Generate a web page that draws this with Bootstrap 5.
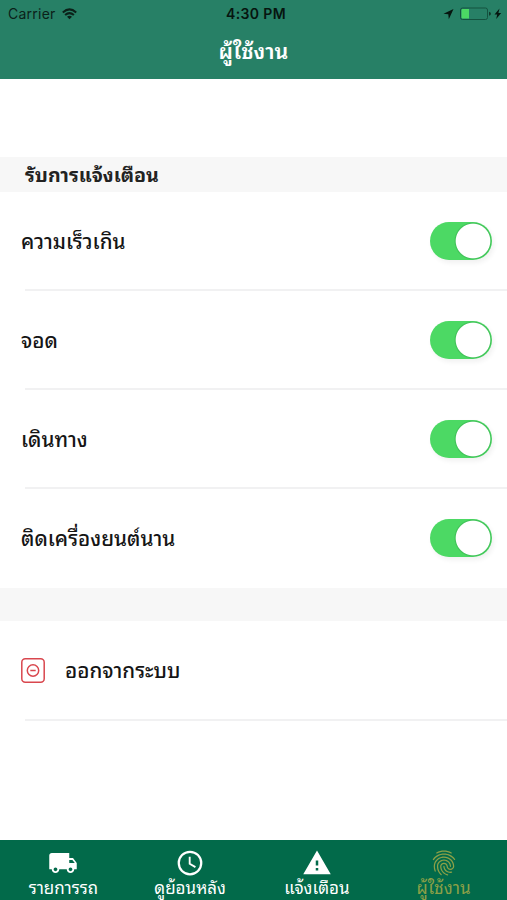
<!DOCTYPE html>
<html lang="th">
<head>
<meta charset="utf-8">
<meta name="viewport" content="width=device-width, initial-scale=1">
<title>ผู้ใช้งาน</title>
<link rel="stylesheet" href="https://cdn.jsdelivr.net/npm/bootstrap@5.3.0/dist/css/bootstrap.min.css">
<style>
body{font-family:Thonburi,"Noto Sans Thai Looped",Loma,Garuda,Waree,Sarabun,"Noto Sans Thai","Noto Sans","Liberation Sans",sans-serif;color:#151515;background:#fff}
svg{display:block;flex:none}
.screen{height:900px;overflow:hidden}
.app-head{height:79px;background:#278066;flex:none}
.status{height:27px;display:grid;grid-template-columns:1fr auto 1fr;font-family:Inter,"Liberation Sans",sans-serif;font-size:14px;color:#0b2119;padding:0 5px 0 8px}
.status .clock{font-weight:600;color:#06150f;letter-spacing:.35px;padding-left:2px}
.carrier{letter-spacing:.25px}
.wifi{margin-left:6px}
.title{height:52px;color:#fff;font-size:21.5px;font-weight:600;line-height:46px}
.spacer{height:78px}
.section-head{height:35px;line-height:33px;background:#f7f7f7;padding-left:25px;font-size:19.6px;font-weight:700;color:#222}
.setting{height:99px;padding:0 15px 0 21px;position:relative;font-size:20.6px;font-weight:500}
.setting span{padding-bottom:3px}
.ruled::after{content:"";position:absolute;left:25px;right:0;bottom:0;height:2px;background:#f1f1f2}
.logout{height:100px}
.logout svg{margin-bottom:1px}
.form-switch .toggle{width:62px;height:38px;margin:0 0 2px;border:0;background-color:#4cd964!important;background-image:radial-gradient(circle,#fff 0 16.8px,#2e9f4666 17.8px,transparent 19px)!important;background-size:38px 38px;background-position:right 0 center!important;box-shadow:2px 3px 5px #0000000f}
.band{height:33px;background:#f7f7f7}
.tabs{height:60px;background:#026a4a;flex:none}
.tab-link{color:#fff;font-size:17px;text-decoration:none;padding-top:8px}
.tab-link span{line-height:18px}
.tab-link.current{color:#8ca047;font-size:17.3px}
.tab-link.current span{line-height:17px}
</style>
<script src="https://cdn.jsdelivr.net/npm/bootstrap@5.3.0/dist/js/bootstrap.bundle.min.js"></script>
</head>
<body>
<div class="screen d-flex flex-column">
<header class="app-head">
  <div class="status align-items-center">
    <div class="d-flex align-items-center"><span class="carrier">Carrier</span>
      <svg class="wifi" width="15" height="12" viewBox="0 0 15 12" fill="none" stroke="#0b2119" stroke-width="2"><path d="M.8 4.400Q7.500-1.600 14.200 4.400M3.100 7Q7.500 3.200 11.900 7"/><path d="M7.500 11.300 5 8.800Q7.500 6.800 10 8.800Z" fill="#0b2119" stroke="none"/></svg>
    </div>
    <span class="clock">4:30 PM</span>
    <div class="d-flex align-items-center justify-content-end">
      <svg width="59" height="14" viewBox="0 0 59 14"><path d="M10.500 2 .5 6.700l4.800.6.5 4.900Z" fill="#06150f"/><rect x="17.500" y="1" width="27" height="11.500" rx="2" fill="none" stroke="#14523f"/><path d="M18.500 3q0-1 1-1h6.500v9.500h-6.500q-1 0-1-1Z" fill="#4cd964"/><path d="M46 4.700q2 .4 2 2t-2 2Z" fill="#123a2d"/><path d="m56.500 1.500-5 6h2.700l-1 4.500 5-6h-2.800Z" fill="#06150f"/></svg>
    </div>
  </div>
  <h1 class="title text-center m-0">ผู้ใช้งาน</h1>
</header>
<main class="flex-grow-1">
  <div class="spacer"></div>
  <h2 class="section-head m-0">รับการแจ้งเตือน</h2>
  <label class="setting ruled form-switch d-flex align-items-center justify-content-between"><span>ความเร็วเกิน</span><input class="form-check-input toggle" type="checkbox" role="switch" checked></label>
  <label class="setting ruled form-switch d-flex align-items-center justify-content-between"><span>จอด</span><input class="form-check-input toggle" type="checkbox" role="switch" checked></label>
  <label class="setting ruled form-switch d-flex align-items-center justify-content-between"><span>เดินทาง</span><input class="form-check-input toggle" type="checkbox" role="switch" checked></label>
  <label class="setting form-switch d-flex align-items-center justify-content-between"><span>ติดเครื่องยนต์นาน</span><input class="form-check-input toggle" type="checkbox" role="switch" checked></label>
  <div class="band"></div>
  <div class="setting logout ruled d-flex align-items-center">
    <svg width="24" height="25" viewBox="0 0 24 25" fill="none" stroke="#d9474e" stroke-width="1.500"><rect x=".8" y=".8" width="22.400" height="23.400" rx="3.500"/><circle cx="12" cy="12.500" r="5.700"/><path d="M9.300 12.500h5.400"/></svg>
    <span class="ms-3 ps-1">ออกจากระบบ</span>
  </div>
</main>
<nav class="tabs d-flex">
  <a href="#" class="tab-link col-3 d-flex flex-column align-items-center"><svg width="30" height="30" viewBox="0 0 24 24" fill="#fff"><path d="M20 8h-3V4H3c-1.100 0-2 .9-2 2v11h2c0 1.660 1.340 3 3 3s3-1.340 3-3h6c0 1.660 1.340 3 3 3s3-1.340 3-3h2v-5l-3-4zM6 18.500c-.83 0-1.500-.67-1.500-1.500s.67-1.500 1.500-1.500 1.500.67 1.500 1.500-.67 1.500-1.500 1.500zm13.500-9 1.960 2.500H17V9.500h2.500zm-1.500 9c-.83 0-1.500-.67-1.500-1.500s.67-1.500 1.500-1.500 1.500.67 1.500 1.500-.67 1.500-1.500 1.500z"/></svg><span>รายการรถ</span></a>
  <a href="#" class="tab-link col-3 d-flex flex-column align-items-center"><svg width="30" height="30" viewBox="0 0 24 24" fill="none" stroke="#fff"><circle cx="12" cy="12" r="9" stroke-width="1.800"/><path d="M11.750 7v5.600l4.600 2.700" stroke-width="1.500"/></svg><span>ดูย้อนหลัง</span></a>
  <a href="#" class="tab-link col-3 d-flex flex-column align-items-center"><svg width="30" height="30" viewBox="0 0 24 24" fill="#fff"><path d="M1 21h22L12 2 1 21zm12-3h-2v-2h2v2zm0-4h-2v-4h2v4z"/></svg><span>แจ้งเตือน</span></a>
  <a href="#" class="tab-link current col-3 d-flex flex-column align-items-center"><svg width="30" height="30" viewBox="0 0 24 24" fill="#8ca047"><path d="M17.810 4.470c-.08 0-.16-.02-.23-.06C15.660 3.420 14 3 12.010 3c-1.980 0-3.860.47-5.570 1.410-.24.13-.54.04-.68-.2-.13-.24-.04-.55.2-.68C7.820 2.520 9.860 2 12.010 2c2.130 0 3.990.47 6.030 1.520.25.13.34.43.21.67-.09.18-.26.28-.44.28zM3.500 9.720c-.1 0-.2-.03-.29-.09-.23-.16-.28-.47-.12-.7.99-1.400 2.250-2.500 3.750-3.270C9.980 4.040 14 4.030 17.150 5.650c1.500.77 2.760 1.860 3.750 3.250.16.22.11.54-.12.7-.23.16-.54.11-.7-.12-.9-1.260-2.040-2.250-3.390-2.940-2.870-1.470-6.540-1.470-9.400.01-1.360.7-2.500 1.700-3.400 2.960-.08.14-.23.21-.39.21zm6.250 12.070c-.13 0-.26-.05-.35-.15-.87-.87-1.340-1.430-2.010-2.640-.69-1.230-1.050-2.730-1.050-4.340 0-2.970 2.540-5.390 5.660-5.390s5.660 2.420 5.660 5.390c0 .28-.22.5-.5.5s-.5-.22-.5-.5c0-2.420-2.090-4.390-4.660-4.390-2.570 0-4.660 1.970-4.660 4.390 0 1.440.32 2.770.93 3.850.64 1.150 1.080 1.640 1.850 2.420.19.2.19.51 0 .71-.11.1-.24.15-.37.15zm7.170-1.850c-1.190 0-2.240-.3-3.100-.89-1.490-1.010-2.380-2.650-2.380-4.390 0-.28.22-.5.5-.5s.5.22.5.5c0 1.410.72 2.740 1.940 3.560.71.48 1.540.71 2.540.71.24 0 .64-.03 1.040-.1.27-.05.53.13.58.41.05.27-.13.53-.41.58-.57.11-1.070.12-1.210.12zM14.910 22c-.04 0-.09-.01-.13-.02-1.590-.44-2.630-1.030-3.720-2.100-1.400-1.390-2.170-3.240-2.170-5.220 0-1.620 1.380-2.940 3.080-2.940 1.700 0 3.080 1.320 3.080 2.940 0 1.070.93 1.940 2.080 1.940s2.080-.87 2.080-1.940c0-3.770-3.250-6.830-7.250-6.830-2.840 0-5.440 1.580-6.610 4.030-.39.81-.59 1.760-.59 2.800 0 .78.07 2.010.67 3.610.1.26-.03.55-.29.64-.26.1-.55-.04-.64-.29-.49-1.310-.73-2.610-.73-3.960 0-1.200.23-2.290.68-3.240 1.330-2.790 4.280-4.600 7.510-4.600 4.550 0 8.250 3.510 8.250 7.830 0 1.620-1.380 2.940-3.080 2.940s-3.080-1.320-3.080-2.940c0-1.070-.93-1.940-2.080-1.940s-2.080.87-2.080 1.940c0 1.710.66 3.310 1.870 4.510.95.94 1.860 1.460 3.270 1.850.27.07.42.35.35.61-.05.23-.26.38-.47.38z"/></svg><span>ผู้ใช้งาน</span></a>
</nav>
</div>
</body>
</html>
